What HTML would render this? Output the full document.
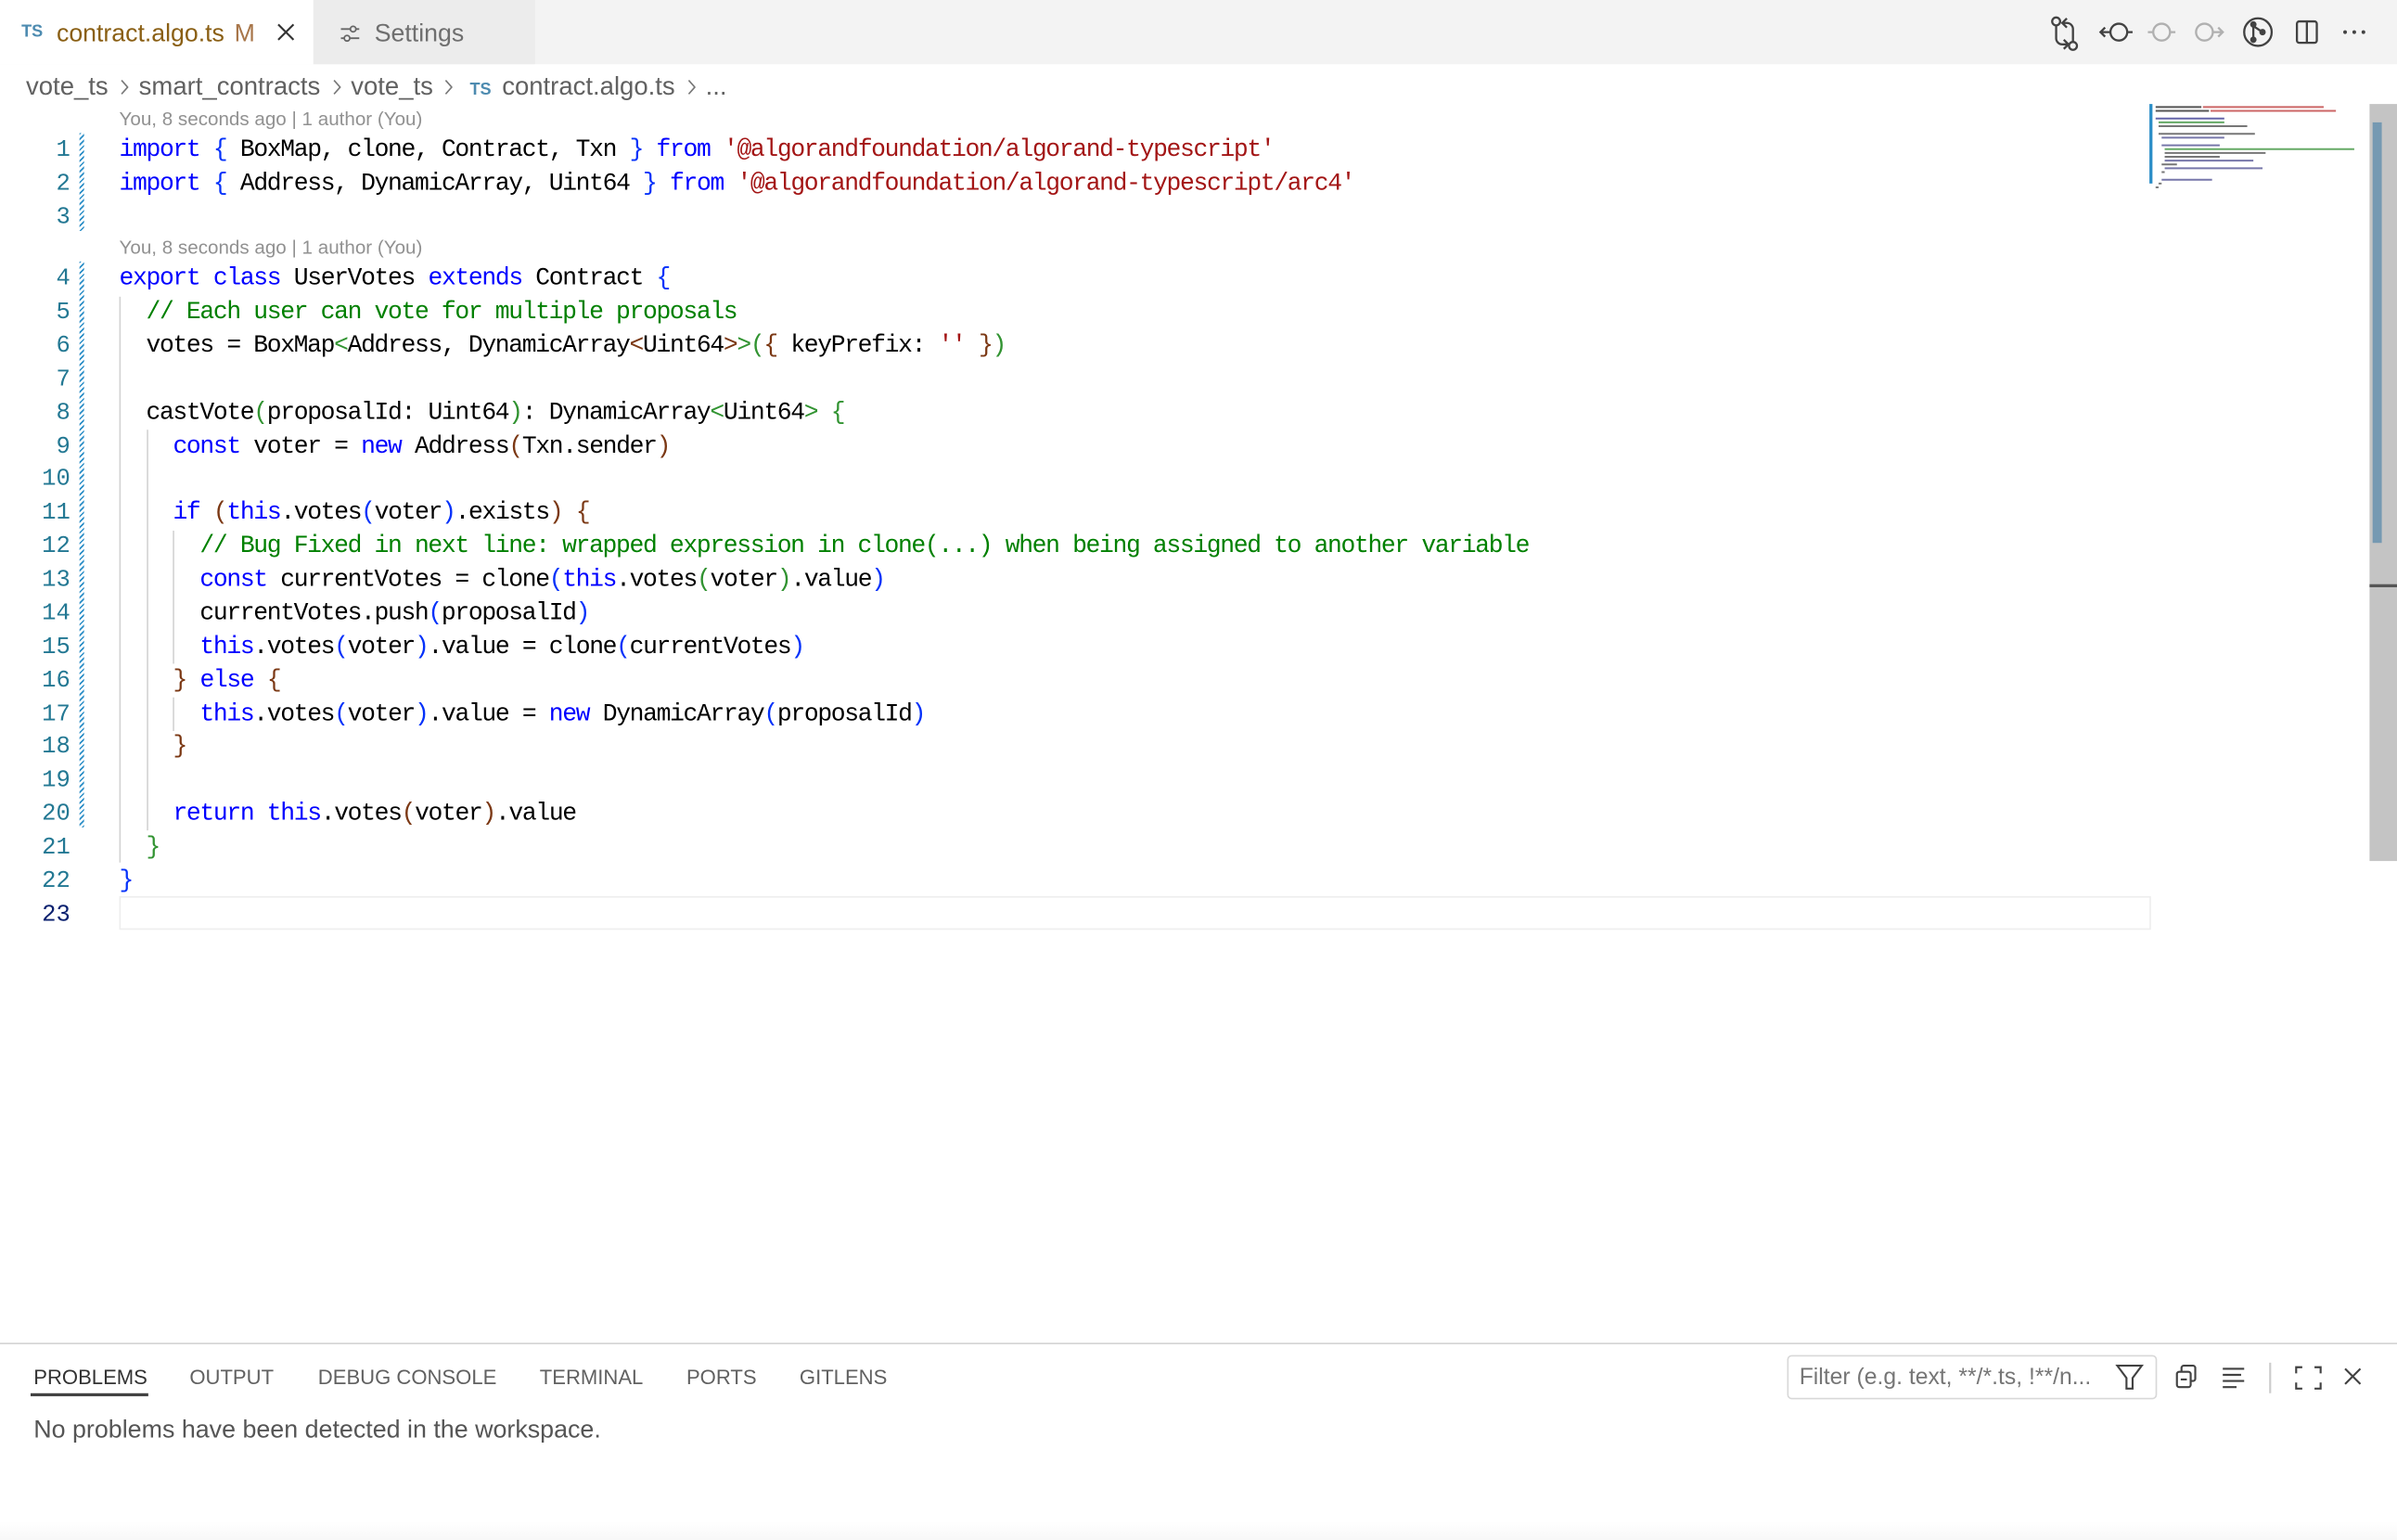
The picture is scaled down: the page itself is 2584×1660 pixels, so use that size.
<!DOCTYPE html>
<html><head><meta charset="utf-8"><style>
html,body{margin:0;padding:0;width:2584px;height:1660px;overflow:hidden;background:#fff}
#w{position:absolute;left:0;top:0;width:1568px;height:1007px;transform:scale(1.648,1.6485);transform-origin:0 0;font-family:"Liberation Sans",sans-serif}
.a{position:absolute}
.code{font-family:"Liberation Mono",monospace;font-size:16px;letter-spacing:-0.82px;white-space:pre;color:#000;line-height:21.85px;height:21.85px}
.ln{font-family:"Liberation Mono",monospace;font-size:15.5px;color:#237893;text-align:right;width:46px;left:0;line-height:21.85px}
.k{color:#0000ff}.s{color:#a31515}.c{color:#008000}.b1{color:#0431fa}.b2{color:#319331}.b3{color:#7b3814}
.lens{font-size:12.5px;color:#919191;left:78px}
.tab{font-size:13.4px;color:#616161;top:893px}
.ch{display:inline-block;width:5px;height:10px;margin:0 7px 0 8px}
</style></head><body><div id="w">
<div class="a" style="left:0;top:0;width:1568px;height:42px;background:#f3f3f3"></div>
<div class="a" style="left:0;top:0;width:205px;height:42px;background:#fff"></div>
<div class="a" style="left:205px;top:0;width:145px;height:42px;background:#ececec"></div>
<div class="a" style="left:14px;top:15px;font-size:11px;font-weight:bold;color:#4d8bb0">TS</div>
<div class="a" style="left:37px;top:13px;font-size:16.2px;color:#8a5f14">contract.algo.ts <span style="margin-left:2px;color:#a8764a">M</span></div>
<svg class="a" style="left:181px;top:15px" width="12" height="12" stroke="#333" stroke-width="1.3"><path d="M1 1l10 10M11 1L1 11"/></svg>
<svg class="a" style="left:222px;top:15px" width="14" height="14" viewBox="0 0 14 14" fill="none" stroke="#666" stroke-width="1.1"><line x1="1" y1="4" x2="13" y2="4"/><circle cx="9" cy="4" r="1.8" fill="#ececec"/><line x1="1" y1="10" x2="13" y2="10"/><circle cx="5" cy="10" r="1.8" fill="#ececec"/></svg>
<div class="a" style="left:245px;top:13px;font-size:16.2px;color:#6f6f6f">Settings</div>
<svg class="a" style="left:1340px;top:10px" width="210" height="24" viewBox="0 0 210 24" fill="none" stroke="#424242" stroke-width="1.4">
<circle cx="5" cy="4" r="2.6"/><path d="M5 7v8a4 4 0 0 0 4 4h3M10 16l3 3-3 3"/><circle cx="16" cy="20" r="2.6"/><path d="M16 17V9a4 4 0 0 0-4-4H9M12 2L9 5l3 3"/>
<circle cx="46" cy="11" r="5.5"/><path d="M40 11h-6M37 8l-3 3 3 3"/><path d="M52 11h3"/>
<g stroke="#b0b0b0"><circle cx="74" cy="11" r="5.5"/><path d="M65 11h3M80 11h3"/><circle cx="102" cy="11" r="5.5"/><path d="M108 11h6M111 8l3 3-3 3"/></g>
<circle cx="137" cy="11" r="9"/><circle cx="134" cy="6" r="1.4" fill="#424242"/><circle cx="134" cy="16" r="1.4" fill="#424242"/><circle cx="140" cy="11" r="1.4" fill="#424242"/><path d="M134 6v10M134 7l6 4"/>
<rect x="162.5" y="4" width="13" height="14" rx="1.5"/><path d="M169 4v14"/>
<g fill="#424242" stroke="none"><circle cx="194" cy="11" r="1.2"/><circle cx="200" cy="11" r="1.2"/><circle cx="206" cy="11" r="1.2"/></g>
</svg>
<div class="a" style="left:17px;top:47px;font-size:16.7px;color:#616161;white-space:nowrap">vote_ts<svg class="ch" viewBox="0 0 5 10"><path d="M0.5 0.5l4 4.5-4 4.5" fill="none" stroke="#777"/></svg>smart_contracts<svg class="ch" viewBox="0 0 5 10"><path d="M0.5 0.5l4 4.5-4 4.5" fill="none" stroke="#777"/></svg>vote_ts<svg class="ch" viewBox="0 0 5 10"><path d="M0.5 0.5l4 4.5-4 4.5" fill="none" stroke="#777"/></svg><span style="font-size:11px;font-weight:bold;color:#4d8bb0;margin-right:7px;margin-left:4px">TS</span>contract.algo.ts<svg class="ch" viewBox="0 0 5 10"><path d="M0.5 0.5l4 4.5-4 4.5" fill="none" stroke="#777"/></svg>...</div>
<div class="a lens" style="top:71px">You, 8 seconds ago | 1 author (You)</div>
<div class="a lens" style="top:155px">You, 8 seconds ago | 1 author (You)</div>
<div class="a" style="left:52px;top:87px;width:3px;height:64px;background:repeating-linear-gradient(135deg,#2b8ec7 0 1px,#fff 1px 2.5px)"></div>
<div class="a" style="left:52px;top:171px;width:3px;height:370px;background:repeating-linear-gradient(135deg,#2b8ec7 0 1px,#fff 1px 2.5px)"></div>
<div class="a" style="left:78px;top:194px;width:1px;height:370px;background:#d3d3d3"></div>
<div class="a" style="left:96px;top:281px;width:1px;height:262px;background:#d3d3d3"></div>
<div class="a" style="left:113px;top:347px;width:1px;height:87px;background:#d3d3d3"></div>
<div class="a" style="left:113px;top:456px;width:1px;height:22px;background:#d3d3d3"></div>
<div class="a" style="left:78px;top:586px;width:1327px;height:20px;border:1.5px solid #eeeeee"></div>
<div class="a ln" style="top:88px">1</div><div class="a ln" style="top:110px">2</div><div class="a ln" style="top:132px">3</div>
<div class="a ln" style="top:172px">4</div><div class="a ln" style="top:194px">5</div><div class="a ln" style="top:216px">6</div><div class="a ln" style="top:238px">7</div><div class="a ln" style="top:260px">8</div><div class="a ln" style="top:282px">9</div><div class="a ln" style="top:303px">10</div><div class="a ln" style="top:325px">11</div><div class="a ln" style="top:347px">12</div><div class="a ln" style="top:369px">13</div><div class="a ln" style="top:391px">14</div><div class="a ln" style="top:413px">15</div><div class="a ln" style="top:435px">16</div><div class="a ln" style="top:457px">17</div><div class="a ln" style="top:478px">18</div><div class="a ln" style="top:500px">19</div><div class="a ln" style="top:522px">20</div><div class="a ln" style="top:544px">21</div><div class="a ln" style="top:566px">22</div><div class="a ln" style="top:588px;color:#0b216f">23</div>
<div class="a code" style="left:78px;top:88px"><span class="k">import</span> <span class="b1">{</span> BoxMap, clone, Contract, Txn <span class="b1">}</span> <span class="k">from</span> <span class="s">'@algorandfoundation/algorand-typescript'</span></div>
<div class="a code" style="left:78px;top:110px"><span class="k">import</span> <span class="b1">{</span> Address, DynamicArray, Uint64 <span class="b1">}</span> <span class="k">from</span> <span class="s">'@algorandfoundation/algorand-typescript/arc4'</span></div>
<div class="a code" style="left:78px;top:172px"><span class="k">export</span> <span class="k">class</span> UserVotes <span class="k">extends</span> Contract <span class="b1">{</span></div>
<div class="a code" style="left:78px;top:194px">  <span class="c">// Each user can vote for multiple proposals</span></div>
<div class="a code" style="left:78px;top:216px">  votes = BoxMap<span class="b2">&lt;</span>Address, DynamicArray<span class="b3">&lt;</span>Uint64<span class="b3">&gt;</span><span class="b2">&gt;(</span><span class="b3">{</span> keyPrefix: <span class="s">''</span> <span class="b3">}</span><span class="b2">)</span></div>
<div class="a code" style="left:78px;top:260px">  castVote<span class="b2">(</span>proposalId: Uint64<span class="b2">)</span>: DynamicArray<span class="b2">&lt;</span>Uint64<span class="b2">&gt;</span> <span class="b2">{</span></div>
<div class="a code" style="left:78px;top:282px">    <span class="k">const</span> voter = <span class="k">new</span> Address<span class="b3">(</span>Txn.sender<span class="b3">)</span></div>
<div class="a code" style="left:78px;top:325px">    <span class="k">if</span> <span class="b3">(</span><span class="k">this</span>.votes<span class="b1">(</span>voter<span class="b1">)</span>.exists<span class="b3">)</span> <span class="b3">{</span></div>
<div class="a code" style="left:78px;top:347px">      <span class="c">// Bug Fixed in next line: wrapped expression in clone(...) when being assigned to another variable</span></div>
<div class="a code" style="left:78px;top:369px">      <span class="k">const</span> currentVotes = clone<span class="b1">(</span><span class="k">this</span>.votes<span class="b2">(</span>voter<span class="b2">)</span>.value<span class="b1">)</span></div>
<div class="a code" style="left:78px;top:391px">      currentVotes.push<span class="b1">(</span>proposalId<span class="b1">)</span></div>
<div class="a code" style="left:78px;top:413px">      <span class="k">this</span>.votes<span class="b1">(</span>voter<span class="b1">)</span>.value = clone<span class="b1">(</span>currentVotes<span class="b1">)</span></div>
<div class="a code" style="left:78px;top:435px">    <span class="b3">}</span> <span class="k">else</span> <span class="b3">{</span></div>
<div class="a code" style="left:78px;top:457px">      <span class="k">this</span>.votes<span class="b1">(</span>voter<span class="b1">)</span>.value = <span class="k">new</span> DynamicArray<span class="b1">(</span>proposalId<span class="b1">)</span></div>
<div class="a code" style="left:78px;top:478px">    <span class="b3">}</span></div>
<div class="a code" style="left:78px;top:522px">    <span class="k">return</span> <span class="k">this</span>.votes<span class="b3">(</span>voter<span class="b3">)</span>.value</div>
<div class="a code" style="left:78px;top:544px">  <span class="b2">}</span></div>
<div class="a code" style="left:78px;top:566px"><span class="b1">}</span></div>
<div class="a" style="left:1406px;top:68px;width:2px;height:52px;background:#2b8ec7"></div>
<svg class="a" style="left:1410px;top:68px" width="135" height="56" stroke-width="1.2">
<line x1="0" y1="2" x2="30" y2="2" stroke="#555"/><line x1="31" y1="2" x2="110" y2="2" stroke="#c66"/>
<line x1="0" y1="4.5" x2="35" y2="4.5" stroke="#555"/><line x1="36" y1="4.5" x2="118" y2="4.5" stroke="#c66"/>
<line x1="0" y1="9.5" x2="45" y2="9.5" stroke="#66a"/><line x1="2" y1="12" x2="45" y2="12" stroke="#6a6"/><line x1="2" y1="14.5" x2="60" y2="14.5" stroke="#777"/>
<line x1="2" y1="19.5" x2="65" y2="19.5" stroke="#777"/><line x1="4" y1="22" x2="45" y2="22" stroke="#77a"/>
<line x1="4" y1="27" x2="42" y2="27" stroke="#77a"/><line x1="6" y1="29.5" x2="130" y2="29.5" stroke="#6a6"/><line x1="6" y1="32" x2="72" y2="32" stroke="#777"/><line x1="6" y1="34.5" x2="42" y2="34.5" stroke="#777"/><line x1="6" y1="37" x2="64" y2="37" stroke="#77a"/><line x1="4" y1="39.5" x2="14" y2="39.5" stroke="#777"/><line x1="6" y1="42" x2="70" y2="42" stroke="#77a"/><line x1="4" y1="44.5" x2="6" y2="44.5" stroke="#777"/>
<line x1="4" y1="49.5" x2="37" y2="49.5" stroke="#77a"/><line x1="2" y1="52" x2="4" y2="52" stroke="#777"/><line x1="0" y1="54.5" x2="2" y2="54.5" stroke="#777"/>
</svg>
<div class="a" style="left:1550px;top:68px;width:18px;height:495px;background:#c4c4c4"></div>
<div class="a" style="left:1552px;top:80px;width:6px;height:275px;background:#7599b2"></div>
<div class="a" style="left:1550px;top:382px;width:18px;height:2px;background:#555"></div>
<div class="a" style="left:0;top:878px;width:1568px;height:1px;background:#d4d4d4"></div>
<div class="a tab" style="left:22px;color:#333">PROBLEMS</div>
<div class="a" style="left:20px;top:911px;width:77px;height:2px;background:#424242"></div>
<div class="a tab" style="left:124px">OUTPUT</div>
<div class="a tab" style="left:208px">DEBUG CONSOLE</div>
<div class="a tab" style="left:353px">TERMINAL</div>
<div class="a tab" style="left:449px">PORTS</div>
<div class="a tab" style="left:523px">GITLENS</div>
<div class="a" style="left:22px;top:926px;font-size:16.3px;color:#555">No problems have been detected in the workspace.</div>
<div class="a" style="left:1169px;top:886px;width:242px;height:29px;border:1px solid #d8d8d8;border-radius:3px;box-sizing:border-box"></div>
<div class="a" style="left:1177px;top:892px;font-size:15px;color:#767676">Filter (e.g. text, **/*.ts, !**/n...</div>
<svg class="a" style="left:1382px;top:888px" width="170" height="26" fill="none" stroke="#424242" stroke-width="1.3">
<path d="M3 5h16l-6 8v7h-4v-7z"/>
<rect x="42" y="9" width="9" height="10" rx="1.5"/><path d="M45 9V6.5a1.5 1.5 0 0 1 1.5-1.5h6a1.5 1.5 0 0 1 1.5 1.5v7a1.5 1.5 0 0 1-1.5 1.5H51M44.5 14h4"/>
<path d="M72 7h14M72 11h12M72 15h14M72 19h9"/>
<path d="M103 3v20" stroke="#ccc"/>
<path d="M120 10V6h4M132 6h4v4M136 16v4h-4M124 20h-4v-4"/>
<path d="M152 7l10 10M162 7l-10 10"/>
</svg>
<div class="a" style="left:0;top:995px;width:1568px;height:12px;background:linear-gradient(#fff,#f8f8f8)"></div>
</div></body></html>
